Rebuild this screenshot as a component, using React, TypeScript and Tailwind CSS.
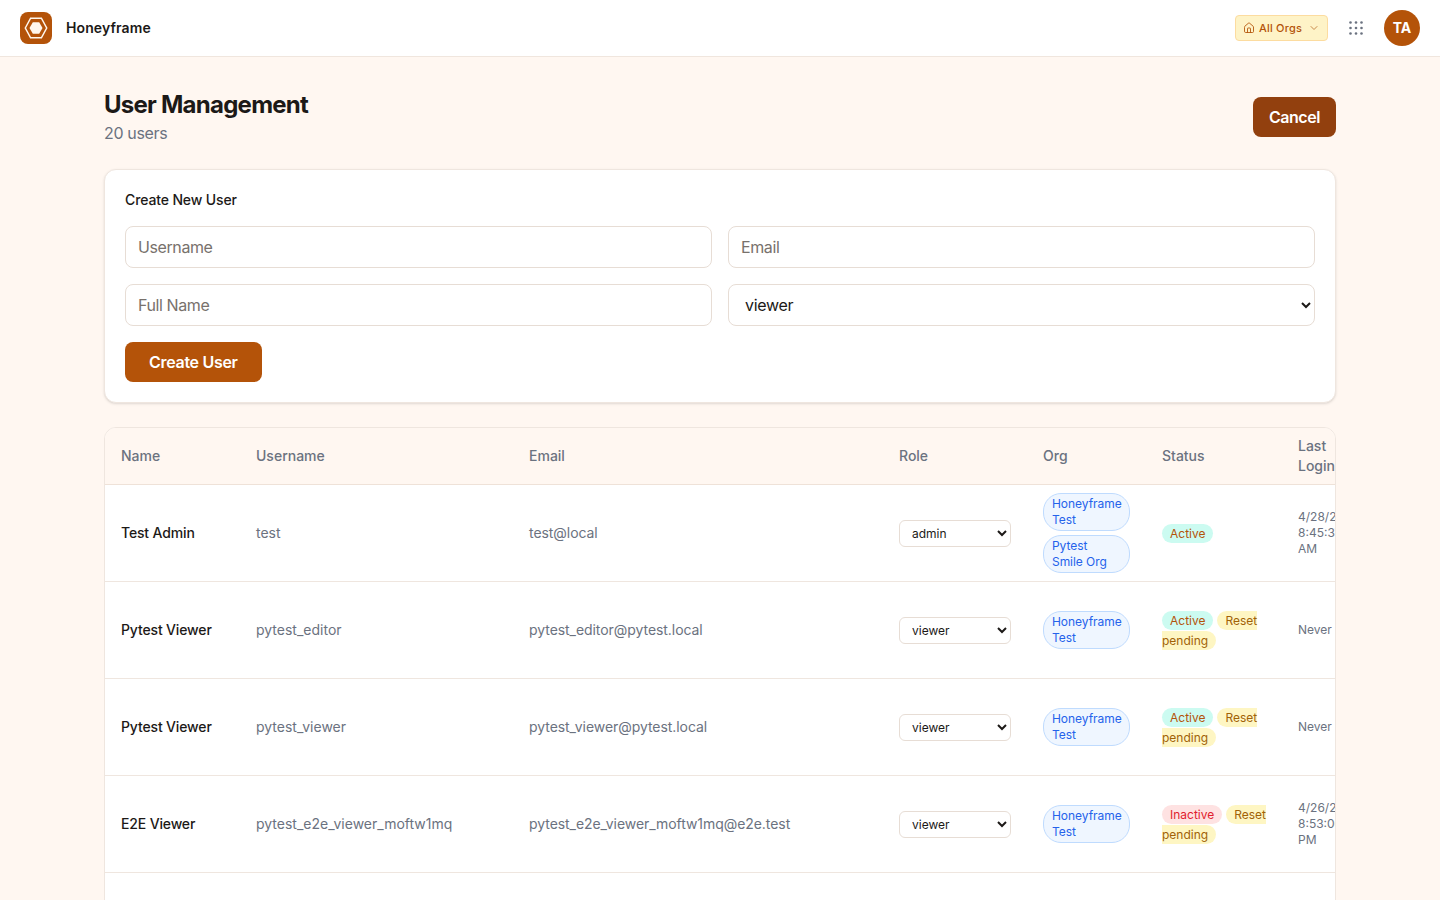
import { ChevronDown, Home } from "lucide-react";

type Row = {
  name: string;
  username: string;
  email: string;
  role: string;
  orgs: string[];
  active: boolean;
  reset: boolean;
  login: string;
};

const rows: Row[] = [
  { name: "Test Admin", username: "test", email: "test@local", role: "admin", orgs: ["Honeyframe Test", "Pytest Smile Org"], active: true, reset: false, login: "4/28/2026, 8:45:37 AM" },
  { name: "Pytest Viewer", username: "pytest_editor", email: "pytest_editor@pytest.local", role: "viewer", orgs: ["Honeyframe Test"], active: true, reset: true, login: "Never" },
  { name: "Pytest Viewer", username: "pytest_viewer", email: "pytest_viewer@pytest.local", role: "viewer", orgs: ["Honeyframe Test"], active: true, reset: true, login: "Never" },
  { name: "E2E Viewer", username: "pytest_e2e_viewer_moftw1mq", email: "pytest_e2e_viewer_moftw1mq@e2e.test", role: "viewer", orgs: ["Honeyframe Test"], active: false, reset: true, login: "4/26/2026, 8:53:06 PM" },
  { name: "E2E Viewer", username: "pytest_e2e_viewer_moftvz2k", email: "pytest_e2e_viewer_moftvz2k@e2e.test", role: "viewer", orgs: ["Honeyframe Test"], active: false, reset: true, login: "4/26/2026, 8:52:41 PM" },
];

const headers = ["Name", "Username", "Email", "Role", "Org", "Status", "Last Login"];

function AppsIcon() {
  const dots = [];
  for (const y of [2.5, 8, 13.5]) {
    for (const x of [2.5, 8, 13.5]) {
      dots.push(<circle key={`${x}-${y}`} cx={x} cy={y} r={1.3} fill="#6b7280" />);
    }
  }
  return (
    <svg width="16" height="16" viewBox="0 0 16 16" className="block">
      {dots}
    </svg>
  );
}

function Logo() {
  return (
    <div className="flex h-8 w-8 items-center justify-center rounded-lg bg-[#b45309]">
      <svg width="32" height="32" viewBox="0 0 32 32" className="block">
        <polygon points="5.3,16 10.6,6.2 21.4,6.2 26.7,16 21.4,25.8 10.6,25.8" fill="none" stroke="#fff7ed" strokeWidth="1.5" />
        <polygon points="9.5,16 12.8,10.2 19.2,10.2 22.5,16 19.2,21.8 12.8,21.8" fill="#fff7ed" />
      </svg>
    </div>
  );
}

export default function App() {
  return (
    <div className="min-h-screen bg-[#fff7f1] font-['Inter',sans-serif] text-[#1c1917]">
      <header className="flex h-[57px] items-center justify-between border-b border-[#f0e6de] bg-white px-5">
        <div className="flex items-center gap-3.5">
          <Logo />
          <span className="text-sm font-semibold tracking-[0.1px]">Honeyframe</span>
        </div>
        <div className="flex items-center gap-5">
          <button className="flex h-[26px] w-[93px] items-center justify-center gap-1 rounded border border-[#fcdca0] bg-[#fef3c7] text-[11px] font-medium tracking-[0.2px] text-[#b45309]">
            <Home size={12} strokeWidth={1.75} />
            <span>All Orgs</span>
            <ChevronDown size={12} className="ml-0.5 text-[#c98a4b]" />
          </button>
          <AppsIcon />
          <div className="flex h-9 w-9 items-center justify-center rounded-full bg-[#b45309] text-sm font-bold text-white">TA</div>
        </div>
      </header>

      <main className="mx-auto max-w-7xl px-6 py-8">
        <div className="mb-6 flex items-center justify-between">
          <div>
            <h1 className="text-2xl font-bold leading-8 tracking-[-0.75px] text-[#1c1917]">User Management</h1>
            <p className="text-base leading-6 tracking-[-0.35px] text-[#6b7280]">20 users</p>
          </div>
          <button className="h-10 rounded-lg bg-[#92400e] px-4 text-base font-semibold tracking-[-0.45px] text-white">Cancel</button>
        </div>

        <section className="mb-6 rounded-xl border border-[#efe6df] bg-white p-5 shadow-sm">
          <h2 className="mb-4 text-sm font-medium leading-5 tracking-[-0.13px]">Create New User</h2>
          <div className="mb-4 grid grid-cols-2 gap-4">
            <input placeholder="Username" className="h-[42px] rounded-lg border border-[#e7ddd5] bg-white px-3 text-base tracking-[-0.4px] placeholder:text-[#78716c]" />
            <input placeholder="Email" className="h-[42px] rounded-lg border border-[#e7ddd5] bg-white px-3 text-base tracking-[-0.4px] placeholder:text-[#78716c]" />
            <input placeholder="Full Name" className="h-[42px] rounded-lg border border-[#e7ddd5] bg-white px-3 text-base tracking-[-0.4px] placeholder:text-[#78716c]" />
            <select defaultValue="viewer" className="h-[42px] rounded-lg border border-[#e7ddd5] bg-white px-3 text-base tracking-[-0.3px] text-[#1c1917]">
              <option>viewer</option>
              <option>editor</option>
              <option>admin</option>
            </select>
          </div>
          <button className="h-10 rounded-lg bg-[#b45309] px-6 text-base font-semibold tracking-[-0.3px] text-white">Create User</button>
        </section>

        <section className="overflow-hidden rounded-xl border border-[#efe6df] bg-white">
          <table className="w-[1272px] table-fixed border-collapse text-left text-sm">
            <colgroup>
              <col className="w-[135px]" />
              <col className="w-[273px]" />
              <col className="w-[370px]" />
              <col className="w-[144px]" />
              <col className="w-[119px]" />
              <col className="w-[136px]" />
              <col className="w-[95px]" />
            </colgroup>
            <thead>
              <tr className="border-b border-[#efe2d8] bg-[#fff7f1]">
                {headers.map((h) => (
                  <th key={h} className="h-[56px] px-4 text-sm font-medium leading-5 text-[#6b7280]">{h}</th>
                ))}
              </tr>
            </thead>
            <tbody>
              {rows.map((r, i) => (
                <tr key={i} className="h-[97px] border-b border-[#efe6df]">
                  <td className="px-4 font-medium tracking-[-0.15px]">{r.name}</td>
                  <td className="px-4 text-[#6b7280]">{r.username}</td>
                  <td className="px-4 tracking-[-0.06px] text-[#6b7280]">{r.email}</td>
                  <td className="px-4">
                    <select defaultValue={r.role} className="mt-0.5 h-[27px] w-full rounded-md border border-[#e7ddd5] bg-white px-2 text-xs text-[#1c1917]">
                      <option>admin</option>
                      <option>editor</option>
                      <option>viewer</option>
                    </select>
                  </td>
                  <td className="px-4">
                    <div className="flex flex-col gap-1">
                      {r.orgs.map((o) => (
                        <span key={o} className="rounded-[18px] border border-[#bfdbfe] bg-[#eff6ff] px-2 py-0.5 text-xs leading-4 tracking-[-0.05px] text-[#2563eb]">{o}</span>
                      ))}
                    </div>
                  </td>
                  <td className="px-4 leading-5">
                    {r.active ? (
                      <span className="rounded-full bg-[#ccfbf1] px-2 py-0.5 text-xs text-[#b45309]">Active</span>
                    ) : (
                      <span className="rounded-full bg-[#fee2e2] px-2 py-0.5 text-xs text-[#e11d2e]">Inactive</span>
                    )}
                    {r.reset ? " " : null}
                    {r.reset ? (
                      <span className="rounded-full bg-[#fef6c3] px-2 py-0.5 text-xs text-[#a16207]">Reset pending</span>
                    ) : null}
                  </td>
                  <td className="px-4 text-xs leading-4 text-[#6b7280]">{r.login}</td>
                </tr>
              ))}
            </tbody>
          </table>
        </section>
      </main>
    </div>
  );
}
